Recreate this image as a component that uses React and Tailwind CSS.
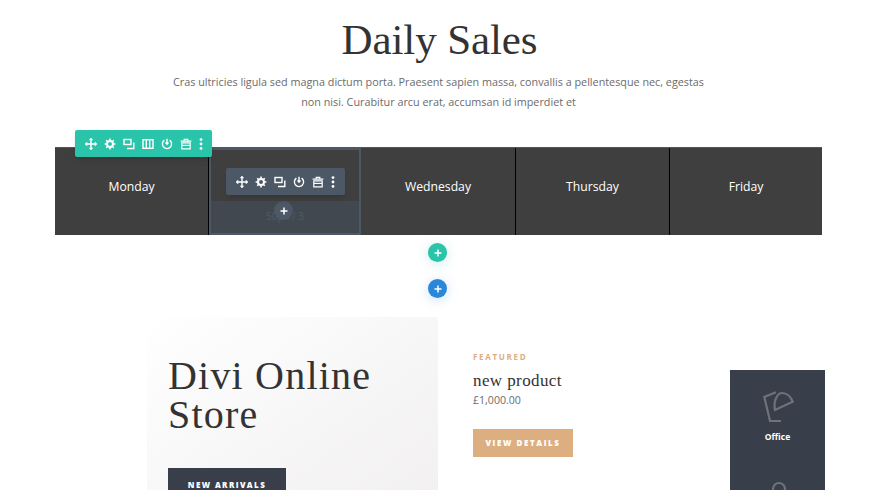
const serif = { fontFamily: '"Liberation Serif", serif' };

function Icon({ children, size = 12 }) {
  return (
    <svg width={size} height={size} viewBox="0 0 12 12" fill="none" stroke="currentColor" strokeWidth="1.4" className="shrink-0">
      {children}
    </svg>
  );
}

const MoveIcon = () => (
  <Icon>
    <path d="M6 .8v10.4M.8 6h10.4" />
    <path d="M4.6 2.2 6 .8l1.4 1.4M4.6 9.8 6 11.2l1.4-1.4M2.2 4.6.8 6l1.4 1.4M9.8 4.6 11.2 6 9.8 7.4" />
  </Icon>
);

const GearIcon = () => (
  <Icon>
    <circle cx="6" cy="6" r="3" strokeWidth="2" />
    <path d="M6 .6v1.6M6 9.8v1.6M.6 6h1.6M9.8 6h1.6M2.2 2.2l1.1 1.1M8.7 8.7l1.1 1.1M9.8 2.2 8.7 3.3M3.3 8.7 2.2 9.8" strokeWidth="1.6" />
  </Icon>
);

const CloneIcon = () => (
  <Icon>
    <rect x="1" y="1.5" width="7" height="5" />
    <path d="M10.8 4.5v6H4" />
  </Icon>
);

const ColumnsIcon = () => (
  <Icon>
    <rect x="1" y="1.7" width="10" height="8.6" />
    <path d="M4.3 2v8M7.7 2v8" />
  </Icon>
);

const PowerIcon = () => (
  <Icon>
    <path d="M3.4 2.2a4.6 4.6 0 1 0 5.2 0" />
    <path d="M6 .8v5M4.5 4.6 6 6.2l1.5-1.6" />
  </Icon>
);

const TrashIcon = () => (
  <Icon>
    <path d="M.6 3.2h10.8M4.2 3V1.4h3.6V3" strokeWidth="1.2" />
    <path d="M1.8 4.8h8.4v6H1.8z" strokeWidth="1.2" />
    <path d="M2 7.4h8" strokeWidth="1.2" />
  </Icon>
);

const DotsIcon = () => (
  <svg width="4" height="12" viewBox="0 0 4 12" fill="currentColor" className="shrink-0">
    <circle cx="2" cy="1.6" r="1.4" />
    <circle cx="2" cy="6" r="1.4" />
    <circle cx="2" cy="10.4" r="1.4" />
  </svg>
);

const PlusIcon = () => (
  <svg width="8" height="8" viewBox="0 0 8 8" stroke="currentColor" strokeWidth="1.5">
    <path d="M4 .5v7M.5 4h7" />
  </svg>
);

function RoundPlus({ className }) {
  return (
    <div className={`w-[19px] h-[19px] rounded-full flex items-center justify-center text-white ${className}`}>
      <PlusIcon />
    </div>
  );
}

function Cell({ label, width }) {
  return (
    <div className={`${width} flex items-center justify-center pb-[8px] border-r border-black last:border-r-0 text-[12.2px] text-white`}>
      {label}
    </div>
  );
}

export default function App() {
  return (
    <div className="w-[880px] h-[490px] overflow-hidden bg-white text-[#6b6b6b]" style={{ fontFamily: '"Open Sans", sans-serif' }}>
      <div className="pt-[14px] text-center">
        <h1 className="text-[43px] leading-[52px] tracking-[-0.1px] pr-[1px] text-[#333]" style={serif}>Daily Sales</h1>
        <p className="mt-[6px] pr-[3px] text-[10.8px] leading-[20px]">
          Cras ultricies ligula sed magna dictum porta. Praesent sapien massa, convallis a pellentesque nec, egestas
          <br />
          non nisi. Curabitur arcu erat, accumsan id imperdiet et
        </p>
      </div>

      <div className="relative ml-[55px] mt-[35px] w-[767px] h-[88px] flex bg-[#3f3f3f] border-t border-[#555]">
        <div className="absolute left-[20px] top-[-18px] z-10 w-[137px] h-[27px] flex items-center gap-[7px] pl-[10px] rounded-[2px] bg-[#29c4a9] text-white shadow-md">
          <MoveIcon /><GearIcon /><CloneIcon /><ColumnsIcon /><PowerIcon /><TrashIcon /><DotsIcon />
        </div>

        <Cell label="Monday" width="w-[154px]" />
        <div className="relative w-[152px] border-2 border-[#4c5866] flex flex-col">
          <div className="absolute left-[15px] top-[18px] z-10 w-[119px] h-[27px] flex items-center gap-[7px] pl-[10px] rounded-[2px] bg-[#4c5866] text-white shadow-md">
            <MoveIcon /><GearIcon /><CloneIcon /><PowerIcon /><TrashIcon /><DotsIcon />
          </div>
          <div className="h-[51px]" />
          <div className="relative flex-1 bg-[#414850] flex justify-center pt-[8px] text-[10px] font-semibold text-[#4c5866]">
            50px / 3
            <RoundPlus className="absolute left-[63px] top-0 bg-[#4c5866]" />
          </div>
        </div>
        <Cell label="Wednesday" width="w-[155px]" />
        <Cell label="Thursday" width="w-[154px]" />
        <Cell label="Friday" width="w-[152px]" />
      </div>

      <div className="flex flex-col items-center ml-[-5px] mt-[8px] gap-[17px]">
        <RoundPlus className="bg-[#29c4a9] shadow-[0_2px_12px_rgba(41,196,169,0.25)]" />
        <RoundPlus className="bg-[#2b87da] shadow-[0_2px_12px_rgba(43,135,218,0.25)]" />
      </div>

      <div className="flex items-start pl-[147px] mt-[19px]">
        <div className="w-[291px] h-[200px] shrink-0 bg-gradient-to-br from-white to-[#f1efef] pt-[39px] pl-[21px]">
          <h2 className="text-[40px] leading-[39px] tracking-[1.2px] text-[#333]" style={serif}>
            Divi Online
            <br />
            Store
          </h2>
          <div className="mt-[34px] w-[118px] h-[40px] bg-[#383e4a] pt-[8px] text-center text-[8px] leading-[17px] font-extrabold tracking-[1.4px] text-white">
            NEW ARRIVALS
          </div>
        </div>

        <div className="ml-[35px] w-[257px] shrink-0 pt-[35px]">
          <div className="text-[8px] leading-[10px] font-bold tracking-[1.7px] text-[#dcae80]">FEATURED</div>
          <div className="mt-[7px] text-[17px] leading-[24px] tracking-[0.4px] text-[#333]" style={serif}>new product</div>
          <div className="mt-[-1px] text-[10.6px] leading-[16px]">£1,000.00</div>
          <div className="mt-[21px] w-[100px] h-[28px] flex items-center justify-center bg-[#dcae80] text-[8px] font-extrabold tracking-[1.6px] text-white">
            VIEW DETAILS
          </div>
        </div>

        <div className="w-[95px] h-[130px] shrink-0 mt-[53px] bg-[#383e4a] flex flex-col items-center">
          <svg width="36" height="36" viewBox="0 0 36 36" fill="none" stroke="#6f7378" strokeWidth="2.2" className="mt-[18px]">
            <path d="M16 4.3 4.3 9 10 33h11" />
            <path d="M15 22C13 12 18 5 22 5c5 0 9 4 10.7 8.7z" />
          </svg>
          <div className="mt-[7px] text-[8.5px] leading-[12px] font-bold text-white">Office</div>
          <svg width="20" height="20" viewBox="0 0 20 20" fill="none" stroke="#6f7378" strokeWidth="2.2" className="mt-[36px] ml-[3px]">
            <circle cx="10" cy="10" r="6" />
          </svg>
        </div>
      </div>
    </div>
  );
}
